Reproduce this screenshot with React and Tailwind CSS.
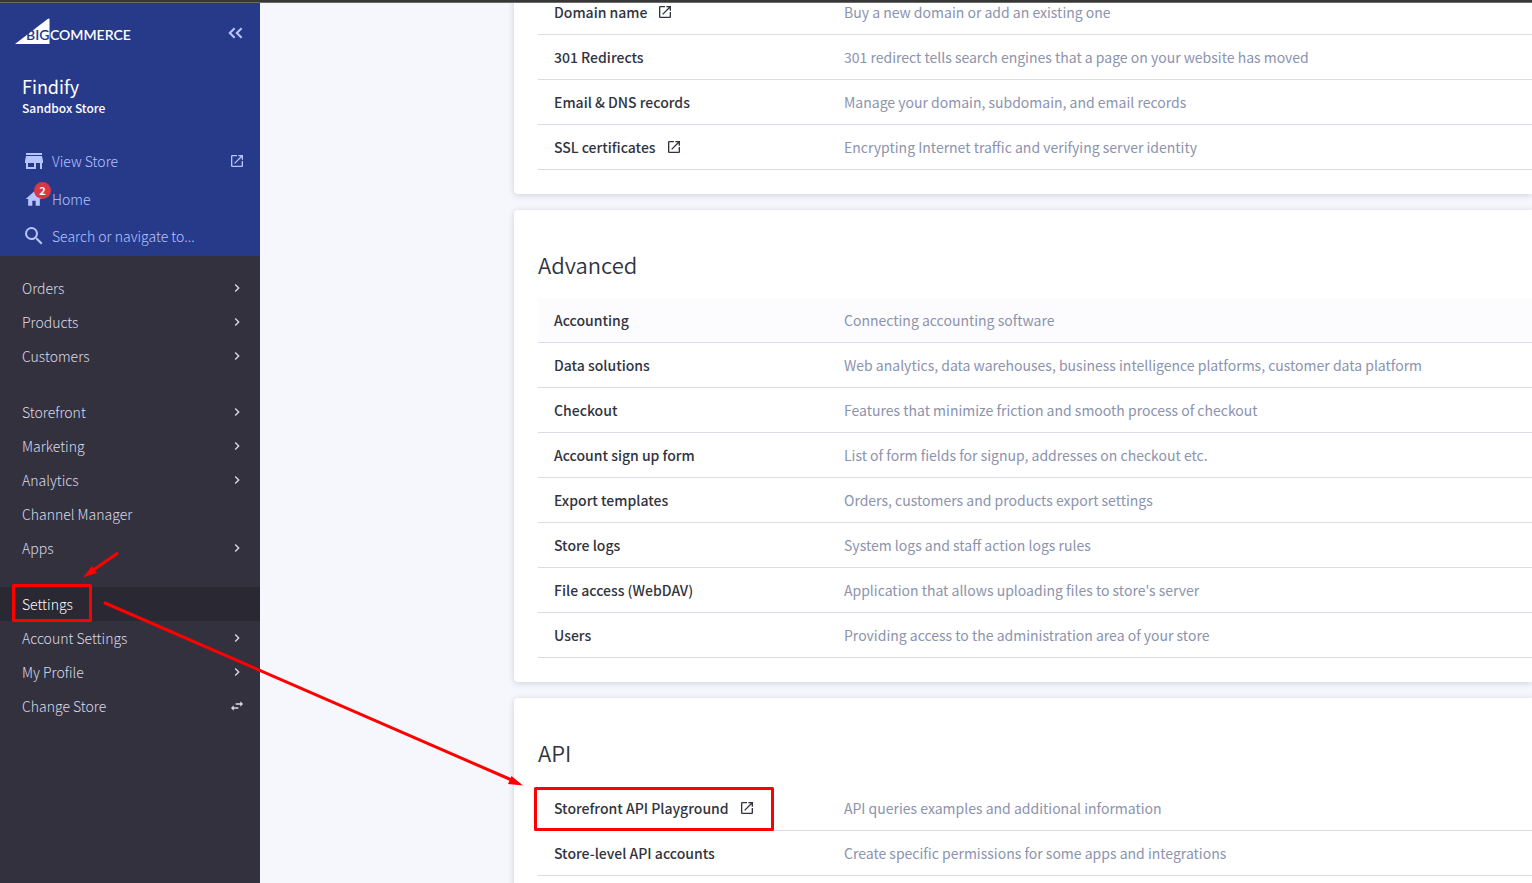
const topLinks = [
  { title: 'Domain name', text: 'Buy a new domain or add an existing one', external: true },
  { title: '301 Redirects', text: '301 redirect tells search engines that a page on your website has moved' },
  { title: 'Email & DNS records', text: 'Manage your domain, subdomain, and email records' },
  { title: 'SSL certificates', text: 'Encrypting Internet traffic and verifying server identity', external: true },
];

const advancedLinks = [
  { title: 'Accounting', text: 'Connecting accounting software', active: true },
  { title: 'Data solutions', text: 'Web analytics, data warehouses, business intelligence platforms, customer data platform' },
  { title: 'Checkout', text: 'Features that minimize friction and smooth process of checkout' },
  { title: 'Account sign up form', text: 'List of form fields for signup, addresses on checkout etc.' },
  { title: 'Export templates', text: 'Orders, customers and products export settings' },
  { title: 'Store logs', text: 'System logs and staff action logs rules' },
  { title: 'File access (WebDAV)', text: "Application that allows uploading files to store's server" },
  { title: 'Users', text: 'Providing access to the administration area of your store' },
];

const apiLinks = [
  { title: 'Storefront API Playground', text: 'API queries examples and additional information', external: true },
  { title: 'Store-level API accounts', text: 'Create specific permissions for some apps and integrations' },
];

const menu = [
  [
    { label: 'Orders', icon: 'chevron' },
    { label: 'Products', icon: 'chevron' },
    { label: 'Customers', icon: 'chevron' },
  ],
  [
    { label: 'Storefront', icon: 'chevron' },
    { label: 'Marketing', icon: 'chevron' },
    { label: 'Analytics', icon: 'chevron' },
    { label: 'Channel Manager' },
    { label: 'Apps', icon: 'chevron' },
  ],
  [
    { label: 'Settings', active: true },
    { label: 'Account Settings', icon: 'chevron' },
    { label: 'My Profile', icon: 'chevron' },
    { label: 'Change Store', icon: 'swap' },
  ],
];

// Material icon outlines on a 24px grid
const icons = {
  chevron: 'M10 6 8.59 7.41 13.17 12l-4.58 4.59L10 18l6-6z',
  swap: 'M6.99 11 3 15l3.99 4v-3H14v-2H6.99v-3zM21 9l-3.99-4v3H10v2h7.01v3L21 9z',
  external: 'M19 19H5V5h7V3H5a2 2 0 0 0-2 2v14a2 2 0 0 0 2 2h14c1.1 0 2-.9 2-2v-7h-2v7zM14 3v2h3.59l-9.83 9.83 1.41 1.41L19 6.41V10h2V3h-7z',
  store: 'M20 4H4v2h16V4zm1 10v-2l-1-5H4l-1 5v2h1v6h10v-6h4v6h2v-6h1zm-9 4H6v-4h6v4z',
  home: 'M10 20v-6h4v6h5v-8h3L12 3 2 12h3v8z',
  search: 'M15.5 14h-.79l-.28-.27A6.471 6.471 0 0 0 16 9.5 6.5 6.5 0 1 0 9.5 16c1.61 0 3.09-.59 4.23-1.57l.27.28v.79l5 4.99L20.49 19l-4.99-5zm-6 0C7.01 14 5 11.99 5 9.5S7.01 5 9.5 5 14 7.01 14 9.5 11.99 14 9.5 14z',
  collapse: 'M18.400 7.900 16.900 6.400 11.300 12l5.600 5.600 1.500-1.500L14.300 12zM11.400 7.900 9.900 6.400 4.300 12l5.600 5.600 1.500-1.500L7.300 12z',
};

function Icon({ name, className }) {
  return (
    <svg viewBox="0 0 24 24" className={className} fill="currentColor" aria-hidden="true">
      <path d={icons[name]} />
    </svg>
  );
}

function Logo() {
  return (
    <svg viewBox="0 0 120 27" className="h-[27px] w-[120px]" role="img" aria-label="BigCommerce">
      <path d="M1 26 34 0.7Q35.500 0 35.500 1.500V26z" fill="#fff" />
      <text x="12" y="22" fontSize="14" fontWeight="600" fill="#273a8a" className="font-['Lato',sans-serif]">BIG</text>
      <text x="36" y="22" fontSize="14" fontWeight="600" fill="#fff" className="font-['Lato',sans-serif]">COMMERCE</text>
    </svg>
  );
}

function Sidebar() {
  return (
    <aside className="w-[260px] shrink-0 bg-[#34313f]">
      <div className="h-[253px] bg-[#273a8a] text-[#b6c4ff]">
        <div className="flex items-center justify-between pt-3.5 pr-3 pl-[14px]">
          <a href="#"><Logo /></a>
          <button type="button" aria-label="Collapse menu" className="pt-1">
            <Icon name="collapse" className="size-6" />
          </button>
        </div>
        <div className="mt-[27px] px-[22px] text-white">
          <h1 className="text-lg leading-7 font-normal">Findify</h1>
          <p className="text-xs leading-4 font-medium">Sandbox Store</p>
        </div>
        <nav className="mt-[26px] text-sm font-light">
          <a href="#" className="flex h-[38px] items-center pr-[15px] pl-[22px]">
            <Icon name="store" className="size-6" />
            <span className="ml-1.5 grow">View Store</span>
            <Icon name="external" className="size-4" />
          </a>
          <a href="#" className="relative flex h-[38px] items-center pl-6">
            <Icon name="home" className="size-5" />
            <span className="absolute top-0.5 left-[34px] flex size-[17px] items-center justify-center rounded-full bg-[#db3643] text-[11px] font-bold text-white">2</span>
            <span className="ml-2">Home</span>
          </a>
          <label className="flex h-9 items-center pl-[22px]">
            <Icon name="search" className="size-6" />
            <input type="text" aria-label="Search" placeholder="Search or navigate to..." className="ml-1.5 w-44 bg-transparent outline-none placeholder:text-[#b6c4ff]" />
          </label>
        </nav>
      </div>
      <nav className="flex flex-col gap-[22px] pt-[15px] text-sm font-light text-[#d9dce9]">
        {menu.map((group, i) => (
          <ul key={i}>
            {group.map((item) => (
              <li key={item.label}>
                <a href="#" className={`flex h-[34px] items-center justify-between pr-[15px] pl-[22px] ${item.active ? 'bg-[#2a2832] text-white' : ''}`}>
                  {item.label}
                  {item.icon && <Icon name={item.icon} className="size-4" />}
                </a>
              </li>
            ))}
          </ul>
        ))}
      </nav>
    </aside>
  );
}

function Panel({ title, links }) {
  return (
    <section className="rounded-l bg-white pb-6 pl-6 shadow-[0_1px_6px_rgba(49,52,64,0.2)]">
      {title && <h2 className="pt-[38px] pb-[18px] text-[22px] leading-8 font-[350]">{title}</h2>}
      <table className="w-full border-separate border-spacing-0 text-sm">
        <tbody>
          {links.map((link) => (
            <tr key={link.title} className={link.active ? 'bg-[#fcfcff]' : ''}>
              <td className="h-[45px] w-[290px] border-b border-[#d9dce9] pl-4 font-medium">
                <a href="#" className="flex items-center gap-2.5">
                  {link.title}
                  {link.external && <Icon name="external" className="size-4" />}
                </a>
              </td>
              <td className="h-[45px] border-b border-[#d9dce9] pl-4 text-[#8c93ad]">{link.text}</td>
            </tr>
          ))}
        </tbody>
      </table>
    </section>
  );
}

function Annotations() {
  return (
    <svg className="pointer-events-none absolute top-0 left-0 h-[883px] w-[800px]" fill="none" stroke="#f00" strokeWidth="3" strokeLinecap="round" strokeLinejoin="round" aria-hidden="true">
      <rect x="13.500" y="585.500" width="77" height="35" />
      <rect x="535.500" y="788.500" width="237" height="41" />
      <path d="M117 553.500 92 571" />
      <path d="M83 577.500 92 566 97 573z" fill="#f00" stroke="none" />
      <path d="M105 603 514 781" />
      <path d="M523 785.500 511.500 776 508 784z" fill="#f00" stroke="none" />
    </svg>
  );
}

export default function App() {
  return (
    <div className="relative flex h-screen flex-col overflow-hidden bg-[#f6f7fc] font-['Noto_Sans_CJK_SC',sans-serif] text-[#313440]">
      <div className="z-10 h-[3px] shrink-0 border-b border-[#6b6b66] bg-[#373737]" />
      <div className="flex min-h-0 grow">
        <Sidebar />
        <main className="grow overflow-hidden pl-[254px]">
          <div className="-mt-[13px] flex flex-col gap-4">
            <Panel links={topLinks} />
            <Panel title="Advanced" links={advancedLinks} />
            <Panel title="API" links={apiLinks} />
          </div>
        </main>
      </div>
      <Annotations />
    </div>
  );
}
